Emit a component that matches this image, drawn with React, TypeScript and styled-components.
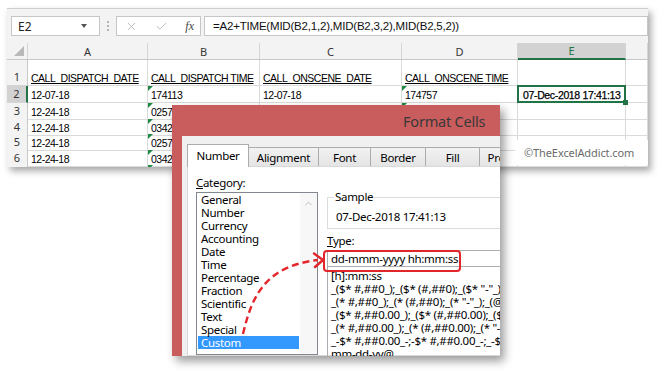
import React from 'react'
import styled, { createGlobalStyle, css } from 'styled-components'
import { X, Check, ChevronUp } from 'lucide-react'

const ui = `'Noto Sans', 'Open Sans', sans-serif`
const sheetFont = `'Liberation Sans', Arial, sans-serif`
const COLS = '21px 120px 112px 142px 116px 108px 22px'
const GREEN = '#217346'

const GlobalStyle = createGlobalStyle`
  html, body { margin: 0; padding: 0; background: #fff; }
  body { font-family: ${ui}; }
  * { box-sizing: border-box; }
`

type SheetRow = { n: number; h: number; cells: string[]; flags?: number[]; underline?: boolean }

const rows: SheetRow[] = [
  { n: 1, h: 26, cells: ['CALL_DISPATCH_DATE', 'CALL_DISPATCH TIME', 'CALL_ONSCENE_DATE', 'CALL_ONSCENE TIME', '', ''], underline: true },
  { n: 2, h: 17, cells: ['12-07-18', '174113', '12-07-18', '174757', '07-Dec-2018 17:41:13', ''], flags: [1, 3] },
  { n: 3, h: 15.5, cells: ['12-24-18', '0257', '', '', '', ''], flags: [1, 3] },
  { n: 4, h: 15.5, cells: ['12-24-18', '0342', '', '', '', ''], flags: [1, 3] },
  { n: 5, h: 15.5, cells: ['12-24-18', '0257', '', '', '', ''], flags: [1, 3] },
  { n: 6, h: 15.5, cells: ['12-24-18', '0342', '', '', '', ''], flags: [1, 3] },
  { n: 7, h: 15.5, cells: ['', '', '', '', '', ''], flags: [1, 3] },
]

const categories = ['General', 'Number', 'Currency', 'Accounting', 'Date', 'Time', 'Percentage', 'Fraction', 'Scientific', 'Text', 'Special', 'Custom']

const formats = [
  '[h]:mm:ss',
  '_($* #,##0_);_($* (#,##0);_($* "-"_);_(@_)',
  '_(* #,##0_);_(* (#,##0);_(* "-"_);_(@_)',
  '_($* #,##0.00_);_($* (#,##0.00);_($* "-"??_);_(@_)',
  '_(* #,##0.00_);_(* (#,##0.00);_(* "-"??_);_(@_)',
  '_-$* #,##0.00_-;-$* #,##0.00_-;_-$* "-"??_-;_-@_-',
  'mm-dd-yy@',
]

const tabs = [
  { label: 'Number', w: 62 },
  { label: 'Alignment', w: 71 },
  { label: 'Font', w: 53 },
  { label: 'Border', w: 56 },
  { label: 'Fill', w: 55 },
  { label: 'Protection', w: 70 },
]

export default function App() {
  return (
    <Page>
      <GlobalStyle />
      <SheetWindow>
        <FormulaArea>
          <NameBox>
            E2
            <Caret />
          </NameBox>
          <Grip>
            <i /><i /><i />
          </Grip>
          <FxBox>
            <X size={13} strokeWidth={1.4} />
            <Check size={13} strokeWidth={1.4} />
            <Fx>fx</Fx>
          </FxBox>
          <FormulaBox>=A2+TIME(MID(B2,1,2),MID(B2,3,2),MID(B2,5,2))</FormulaBox>
        </FormulaArea>

        <HeadRow>
          <Corner />
          {['A', 'B', 'C', 'D', 'E', ''].map((l, i) => (
            <ColHead key={i} $sel={l === 'E'}>{l}</ColHead>
          ))}
        </HeadRow>
        {rows.map(r => (
          <Row key={r.n} $h={r.h}>
            <RowHead $sel={r.n === 2}>{r.n}</RowHead>
            {r.cells.map((c, i) => (
              <Cell
                key={i}
                $flag={r.flags?.includes(i)}
                $u={r.underline}
                $sel={r.n === 2 && i === 4}
              >
                {c}
              </Cell>
            ))}
          </Row>
        ))}

        <Watermark>©TheExcelAddict.com</Watermark>
      </SheetWindow>

      <Dialog>
        <TitleBar>Format Cells</TitleBar>
        <DialogBody>
          <Tabs>
            {tabs.map((t, i) => (
              <Tab key={t.label} $w={t.w} $active={i === 0}>{t.label}</Tab>
            ))}
          </Tabs>
          <Panel>
            <LeftCol>
              <Label><u>C</u>ategory:</Label>
              <ListBox>
                <Items>
                  {categories.map(c => (
                    <Item key={c} $sel={c === 'Custom'}>{c}</Item>
                  ))}
                </Items>
                <ScrollBar>
                  <ChevronUp size={11} strokeWidth={1.5} />
                </ScrollBar>
              </ListBox>
            </LeftCol>
            <RightCol>
              <Group>
                <legend>Sample</legend>
                <SampleValue>07-Dec-2018 17:41:13</SampleValue>
              </Group>
              <TypeLabel><u>T</u>ype:</TypeLabel>
              <TypeInput>
                dd-mmm-yyyy hh:mm:ss
                <Highlight />
              </TypeInput>
              <FormatList>
                {formats.map(f => (
                  <FormatItem key={f}>{f}</FormatItem>
                ))}
              </FormatList>
            </RightCol>
          </Panel>
        </DialogBody>
      </Dialog>

      <Arrow width="670" height="378" viewBox="0 0 670 378">
        <path d="M243,334 C252,295 266,266 318,260" fill="none" stroke="#e3262b" strokeWidth="2.4" strokeDasharray="7 4" />
        <path d="M314,253.5 L323,260 L315,267" fill="none" stroke="#e3262b" strokeWidth="2.4" strokeLinecap="round" strokeLinejoin="round" />
      </Arrow>
    </Page>
  )
}

const Page = styled.div`
  position: relative;
  width: 670px;
  height: 378px;
  overflow: hidden;
  background: #fff;
  padding: 8px 0 0 7px;
`

const SheetWindow = styled.div`
  position: relative;
  width: 641px;
  height: 159px;
  overflow: hidden;
  background: #fff;
  border-top: 1px solid #cfcfcf;
  box-shadow: 3px 4px 7px rgba(0, 0, 0, 0.35);
`

const FormulaArea = styled.div`
  height: 34px;
  background: #f3f3f3;
  display: flex;
  align-items: flex-start;
  padding: 7px 0 0 4px;
`

const box = css`
  height: 20px;
  background: #fff;
  border: 1px solid #c6c6c6;
  display: flex;
  align-items: center;
`

const NameBox = styled.div`
  ${box}
  width: 89px;
  padding: 0 0 0 6px;
  justify-content: space-between;
  font: 12px ${ui};
  color: #222;
`

const Caret = styled.span`
  width: 0;
  height: 0;
  margin-right: 12px;
  border-left: 3.5px solid transparent;
  border-right: 3.5px solid transparent;
  border-top: 4px solid #555;
`

const Grip = styled.div`
  width: 16px;
  height: 20px;
  display: flex;
  flex-direction: column;
  align-items: center;
  justify-content: center;
  gap: 2px;

  i {
    width: 2px;
    height: 2px;
    background: #b4b4b4;
  }
`

const FxBox = styled.div`
  ${box}
  width: 85px;
  padding: 0 6px 0 8px;
  justify-content: space-between;
  color: #a9a9a9;
`

const Fx = styled.span`
  font: italic 12px 'Liberation Serif', serif;
  color: #444;
`

const FormulaBox = styled.div`
  ${box}
  flex: 1;
  margin-left: 3px;
  padding-left: 8px;
  font: 11.5px ${sheetFont};
  letter-spacing: -0.2px;
  color: #111;
  white-space: nowrap;
`

const gridRow = css`
  display: grid;
  grid-template-columns: ${COLS};
`

const HeadRow = styled.div`
  ${gridRow}
  height: 17px;
  background: #f3f3f3;
  border-bottom: 1px solid #c8c8c8;
`

const Corner = styled.div`
  position: relative;
  border-right: 1px solid #d5d5d5;

  &::after {
    content: '';
    position: absolute;
    right: 3px;
    bottom: 3px;
    border-bottom: 10px solid #b9b9b9;
    border-left: 10px solid transparent;
  }
`

const ColHead = styled.div<{ $sel?: boolean }>`
  display: flex;
  align-items: center;
  justify-content: center;
  font: 11px ${ui};
  color: #333;
  border-right: 1px solid #d5d5d5;
  ${p => p.$sel && css`
    background: #d2d2d2;
    color: ${GREEN};
    border-bottom: 2px solid ${GREEN};
    margin-bottom: -1px;
  `}
`

const Row = styled.div<{ $h: number }>`
  ${gridRow}
  height: ${p => p.$h}px;
`

const RowHead = styled.div<{ $sel?: boolean }>`
  display: flex;
  align-items: flex-end;
  justify-content: center;
  padding-bottom: 1px;
  background: ${p => (p.$sel ? '#d2d2d2' : '#f3f3f3')};
  border-bottom: 1px solid #d5d5d5;
  border-right: ${p => (p.$sel ? `2px solid ${GREEN}` : '1px solid #c8c8c8')};
  font: 11px ${ui};
  color: #333;
`

const Cell = styled.div<{ $flag?: boolean; $u?: boolean; $sel?: boolean }>`
  position: relative;
  display: flex;
  align-items: flex-end;
  padding: 0 0 1px 3px;
  border-right: 1px solid #dadada;
  border-bottom: 1px solid #dadada;
  font: 10.5px ${sheetFont};
  letter-spacing: -0.5px;
  color: #000;
  white-space: nowrap;
  text-decoration: ${p => (p.$u ? 'underline' : 'none')};

  ${p => p.$flag && css`
    &::before {
      content: '';
      position: absolute;
      left: 0;
      top: 0;
      border-top: 5px solid #1e8a45;
      border-right: 5px solid transparent;
    }
  `}

  ${p => p.$sel && css`
    z-index: 2;
    padding-left: 5px;
    letter-spacing: -0.35px;
    -webkit-text-stroke: 0.25px #000;

    &::after {
      content: '';
      position: absolute;
      inset: -1px;
      border: 2px solid ${GREEN};
    }
    &::before {
      content: '';
      position: absolute;
      right: -3px;
      bottom: -3px;
      width: 5px;
      height: 5px;
      background: ${GREEN};
      z-index: 3;
    }
  `}
`

const Watermark = styled.div`
  position: absolute;
  left: 508px;
  top: 131px;
  width: 133px;
  height: 25px;
  padding-left: 9px;
  display: flex;
  align-items: center;
  background: #fff;
  font: 11px ${ui};
  letter-spacing: -0.1px;
  color: #6b6b6b;
`

const Dialog = styled.div`
  position: absolute;
  left: 172px;
  top: 105px;
  width: 328px;
  height: 251px;
  z-index: 5;
  display: flex;
  flex-direction: column;
  overflow: hidden;
  background: #c95d5d;
  box-shadow: 4px 5px 9px rgba(0, 0, 0, 0.4);
`

const TitleBar = styled.div`
  flex: none;
  height: 31px;
  display: flex;
  align-items: center;
  padding-left: 231px;
  font: 14.5px ${ui};
  letter-spacing: -0.2px;
  color: #383838;
  white-space: nowrap;
`

const DialogBody = styled.div`
  flex: 1;
  min-height: 0;
  margin-left: 10px;
  padding: 8px 0 0 5px;
  display: flex;
  flex-direction: column;
  background: #f0f0f0;
`

const Tabs = styled.div`
  display: flex;
  align-items: flex-end;
  height: 22px;
  flex: none;
`

const Tab = styled.div<{ $w: number; $active?: boolean }>`
  position: relative;
  flex: none;
  width: ${p => p.$w}px;
  height: ${p => (p.$active ? 23 : 19)}px;
  margin-left: -1px;
  margin-bottom: ${p => (p.$active ? -1 : 0)}px;
  z-index: ${p => (p.$active ? 2 : 1)};
  display: flex;
  align-items: center;
  justify-content: center;
  padding-bottom: ${p => (p.$active ? 2 : 0)}px;
  border: 1px solid #acacac;
  border-bottom: none;
  background: ${p => (p.$active ? '#fff' : 'linear-gradient(#f2f2f2, #e4e4e4)')};
  font: 11.5px ${ui};
  letter-spacing: -0.3px;
  color: #000;
  white-space: nowrap;

  &:first-child {
    margin-left: 0;
  }
`

const Panel = styled.div`
  flex: 1;
  min-height: 0;
  display: flex;
  gap: 9px;
  padding: 9px 0 0 8px;
  background: #fff;
  border: 1px solid #d9d9d9;
  border-right: none;
  font: 11.5px ${ui};
  letter-spacing: -0.3px;
  color: #000;
`

const LeftCol = styled.div`
  flex: none;
  width: 122px;
  display: flex;
  flex-direction: column;
`

const Label = styled.div`
  height: 14px;
  line-height: 14px;
  margin-bottom: 2px;
`

const ListBox = styled.div`
  flex: 1;
  display: flex;
  border: 1px solid #828790;
`

const Items = styled.div`
  flex: 1;
  padding: 0 1px;
`

const Item = styled.div<{ $sel?: boolean }>`
  height: 13px;
  line-height: 13px;
  padding-left: 3px;
  white-space: nowrap;
  background: ${p => (p.$sel ? '#3399ff' : 'transparent')};
  color: ${p => (p.$sel ? '#fff' : '#000')};
`

const ScrollBar = styled.div`
  flex: none;
  width: 17px;
  display: flex;
  justify-content: center;
  padding-top: 5px;
  background: #f7f7f7;
  color: #a6a6a6;
`

const RightCol = styled.div`
  flex: none;
  width: 220px;
  display: flex;
  flex-direction: column;
`

const Group = styled.fieldset`
  margin: 14px 0 0;
  padding: 0 0 4px 6px;
  border: 1px solid #dcdcdc;
  min-width: 0;

  legend {
    padding: 0 1px;
    line-height: 14px;
  }
`

const SampleValue = styled.div`
  margin: 6px 0 0 2px;
  line-height: 14px;
  white-space: nowrap;
`

const TypeLabel = styled.div`
  margin-top: 5px;
  height: 14px;
  line-height: 14px;
`

const TypeInput = styled.div`
  position: relative;
  margin-top: 2px;
  height: 21px;
  padding-left: 3px;
  display: flex;
  align-items: center;
  border: 1px solid #abadb3;
  white-space: nowrap;
`

const Highlight = styled.span`
  position: absolute;
  left: -5px;
  top: -1px;
  width: 138px;
  height: 22px;
  border: 2px solid #e0262b;
  border-radius: 4px;
`

const FormatList = styled.div`
  flex: 1;
  padding: 2px 0 0 3px;
  border: 1px solid #abadb3;
  border-top: none;
`

const FormatItem = styled.div`
  height: 13px;
  line-height: 13px;
  white-space: nowrap;
`

const Arrow = styled.svg`
  position: absolute;
  left: 0;
  top: 0;
  z-index: 10;
  pointer-events: none;
`
